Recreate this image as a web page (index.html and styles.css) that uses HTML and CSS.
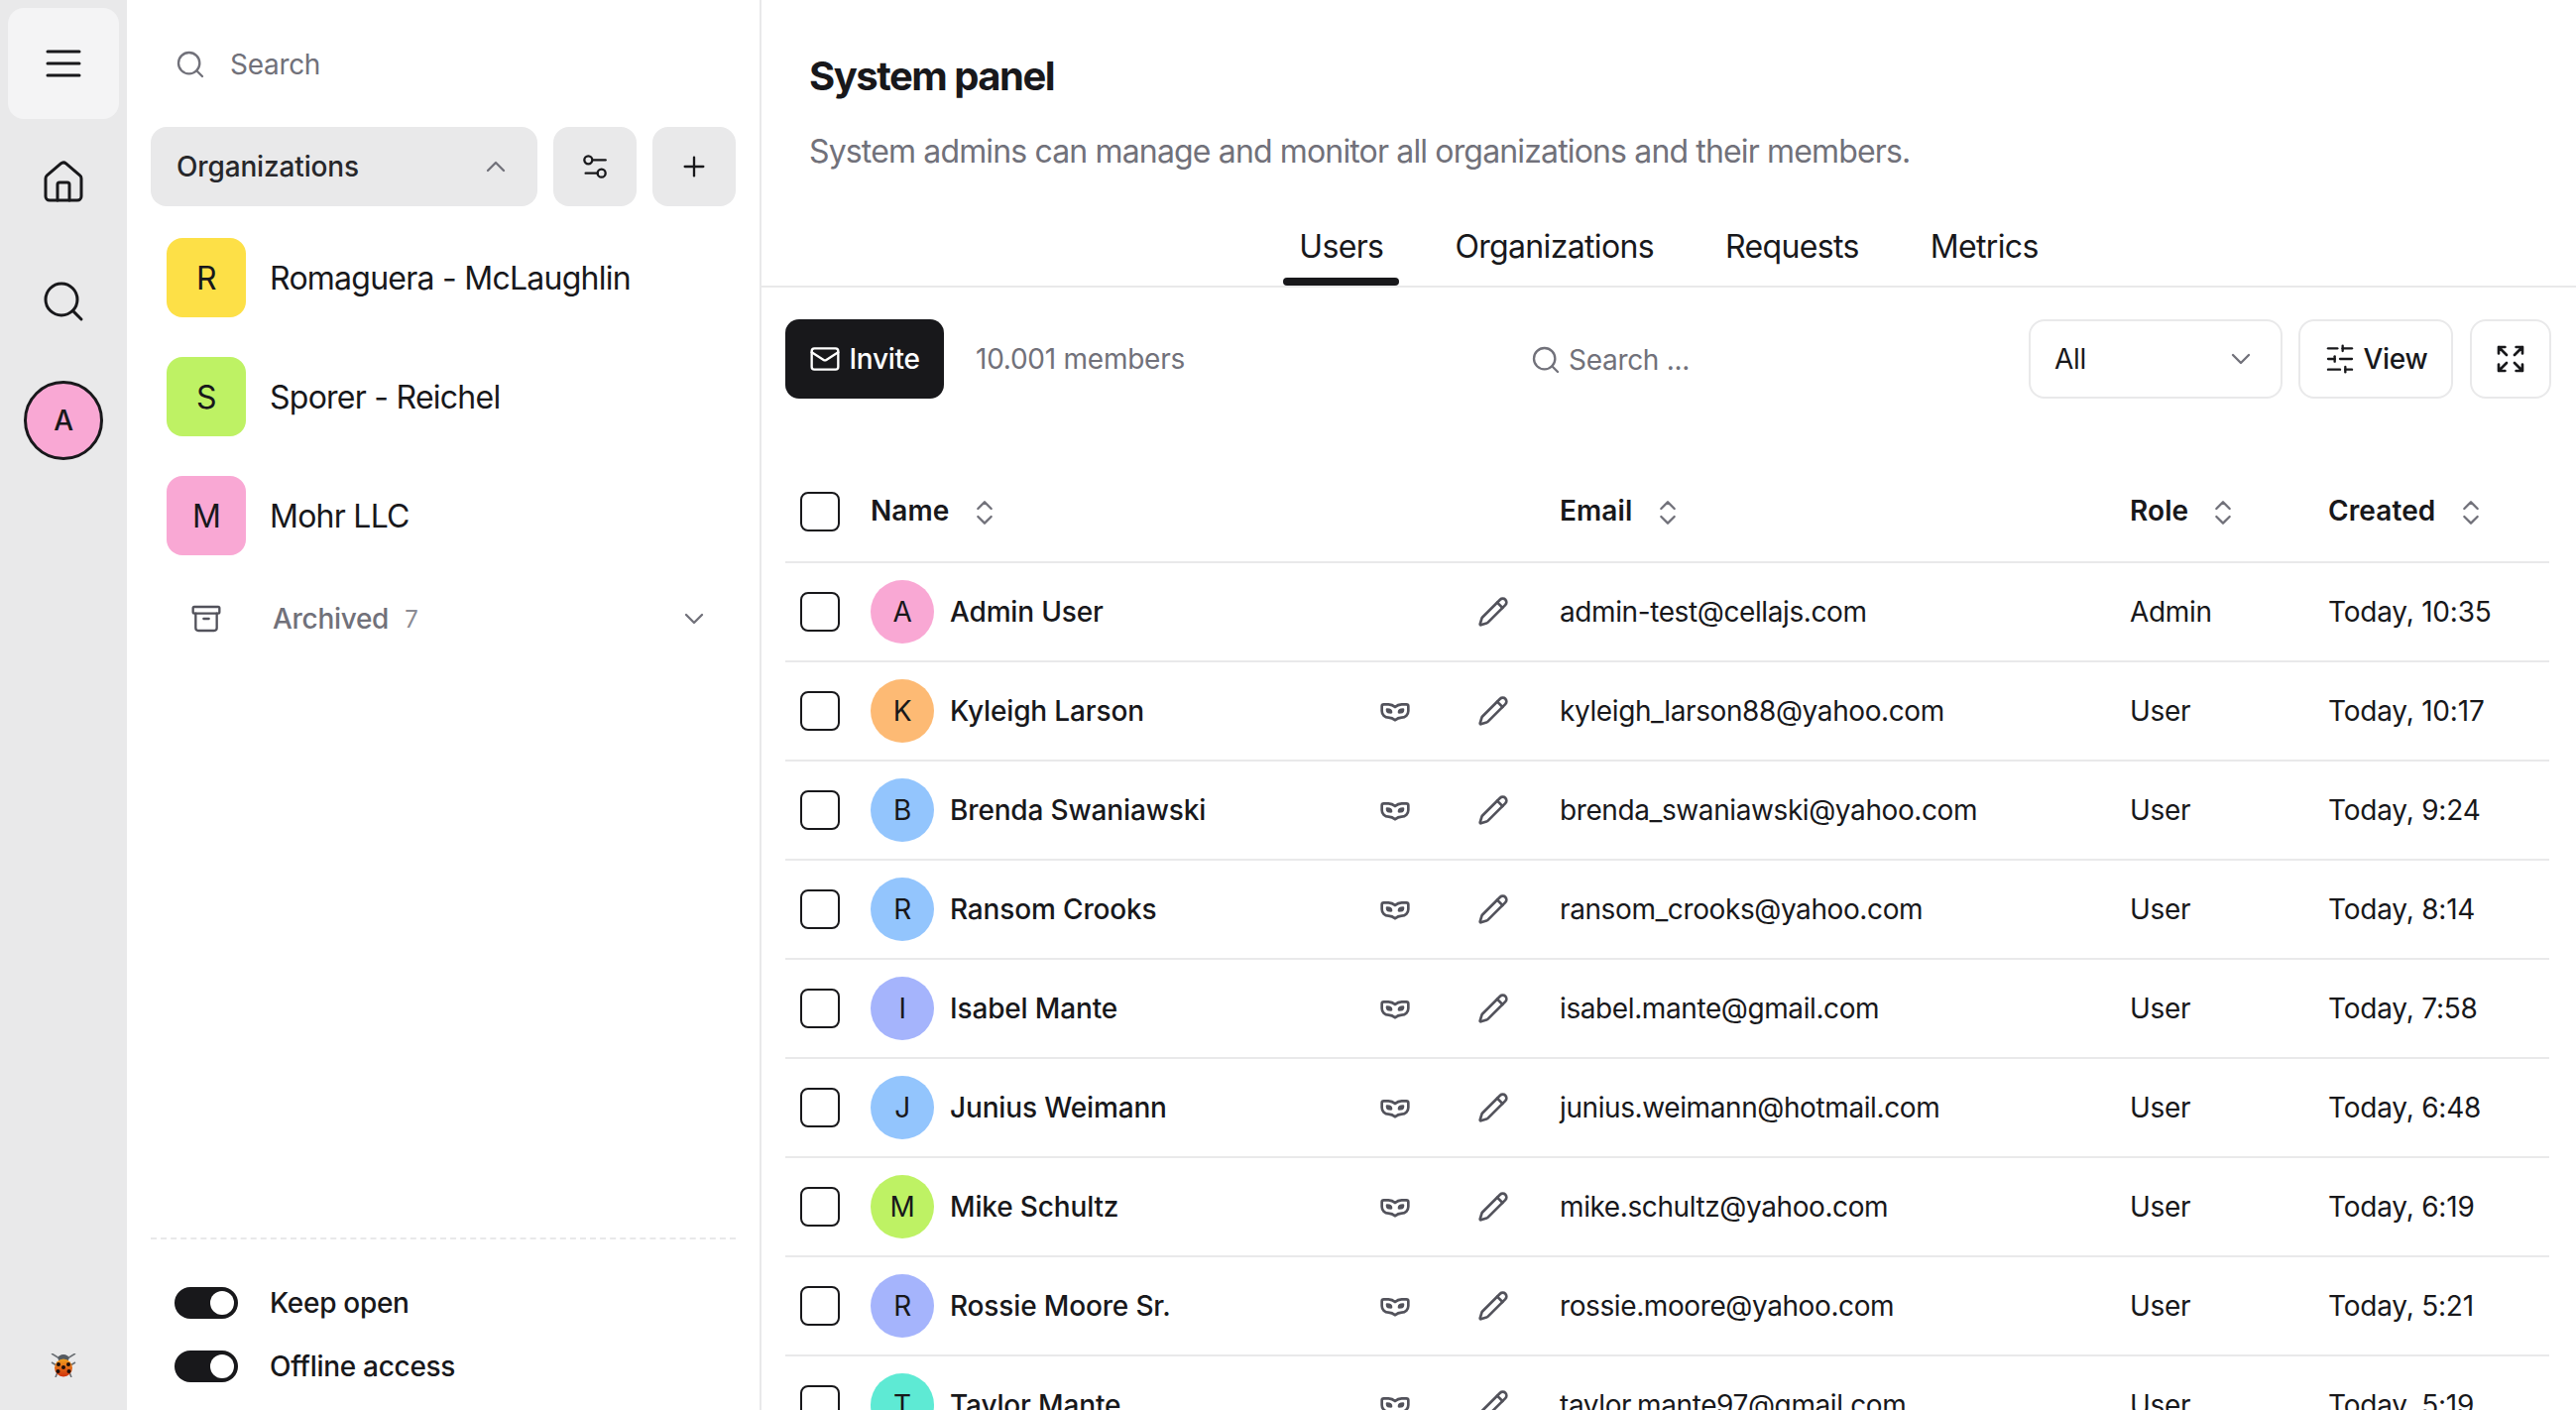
FILE: index.html
```html
<!DOCTYPE html>
<html lang="en">

<head>
    <meta charset="UTF-8">
    <title>System panel</title>
    <link rel="stylesheet" href="styles.css">
</head>

<body>
    <svg class="icon-defs" aria-hidden="true">
        <symbol id="i-search" viewBox="0 0 24 24"><circle cx="11" cy="11" r="8"/><path d="m21 21-4.3-4.3"/></symbol>
        <symbol id="i-sort" viewBox="0 0 24 24"><path d="m7 15 5 5 5-5"/><path d="m7 9 5-5 5 5"/></symbol>
        <symbol id="i-mask" viewBox="0 0 24 24"><path d="M2 12a5 5 0 0 0 5 5 8 8 0 0 1 5 2 8 8 0 0 1 5-2 5 5 0 0 0 5-5V8.5A1.5 1.5 0 0 0 20.500 7H17a8 8 0 0 0-5 2 8 8 0 0 0-5-2H3.500A1.500 1.500 0 0 0 2 8.500Z"/><path d="M6 11c1.500 0 3 .5 3 2-2 0-3 0-3-2Z"/><path d="M18 11c-1.500 0-3 .5-3 2 2 0 3 0 3-2Z"/></symbol>
        <symbol id="i-pencil" viewBox="0 0 24 24"><path d="M21.174 6.812a1 1 0 0 0-3.986-3.987L3.842 16.174a2 2 0 0 0-.5.83l-1.321 4.352a.5.5 0 0 0 .623.622l4.353-1.32a2 2 0 0 0 .83-.497z"/><path d="m15 5 4 4"/></symbol>
    </svg>

    <!-- icon rail -->
    <nav class="rail">
        <button class="rail-btn active">
            <svg class="icon-lg" viewBox="0 0 24 24"><path d="M4 6h16"/><path d="M4 12h16"/><path d="M4 18h16"/></svg>
        </button>
        <button class="rail-btn">
            <svg class="icon-lg" viewBox="0 0 24 24"><path d="M15 21v-8a1 1 0 0 0-1-1h-4a1 1 0 0 0-1 1v8"/><path d="M3 10a2 2 0 0 1 .709-1.528l7-5.999a2 2 0 0 1 2.582 0l7 5.999A2 2 0 0 1 21 10v9a2 2 0 0 1-2 2H5a2 2 0 0 1-2-2z"/></svg>
        </button>
        <button class="rail-btn">
            <svg class="icon-lg" viewBox="0 0 24 24"><use href="#i-search"/></svg>
        </button>
        <button class="rail-btn">
            <span class="rail-avatar">A</span>
        </button>
        <svg class="bug" viewBox="0 0 26 24">
            <defs>
                <linearGradient id="bugBody" x1="0" y1="0" x2="0" y2="1">
                    <stop offset="0" stop-color="#f0a020"/>
                    <stop offset="1" stop-color="#d0300c"/>
                </linearGradient>
            </defs>
            <path class="bug-legs" d="M9 5 1 0M17 5l8-5M6 12 1 9M20 12l5-3M7 19l-2 5M19 19l2 5"/>
            <ellipse cx="13" cy="5" rx="5.500" ry="4" fill="#555a60"/>
            <ellipse cx="13" cy="14.500" rx="9" ry="9" fill="url(#bugBody)"/>
            <g fill="#1d0f0c">
                <circle cx="8" cy="11" r="2"/>
                <circle cx="18" cy="11" r="2"/>
                <circle cx="13" cy="14" r="2"/>
                <circle cx="7.500" cy="18" r="2"/>
                <circle cx="18.500" cy="18" r="2"/>
            </g>
        </svg>
    </nav>

    <!-- organizations sidebar -->
    <aside class="sidebar">
        <div class="side-search">
            <svg class="icon muted" viewBox="0 0 24 24"><use href="#i-search"/></svg>
            <span>Search</span>
        </div>

        <div class="side-actions">
            <button class="side-btn side-btn-wide">
                <span>Organizations</span>
                <svg class="icon muted" viewBox="0 0 24 24"><path d="m18 15-6-6-6 6"/></svg>
            </button>
            <button class="side-btn">
                <svg class="icon" viewBox="0 0 24 24"><path d="M20 7h-9"/><path d="M14 17H5"/><circle cx="17" cy="17" r="3"/><circle cx="7" cy="7" r="3"/></svg>
            </button>
            <button class="side-btn">
                <svg class="icon" viewBox="0 0 24 24"><path d="M5 12h14"/><path d="M12 5v14"/></svg>
            </button>
        </div>

        <ul class="org-list">
            <li class="org-item"><span class="org-tile yellow">R</span>Romaguera - McLaughlin</li>
            <li class="org-item"><span class="org-tile lime">S</span>Sporer - Reichel</li>
            <li class="org-item"><span class="org-tile pink">M</span>Mohr LLC</li>
        </ul>

        <div class="archived">
            <svg class="icon archived-icon" viewBox="0 0 24 24"><rect x="2" y="3" width="20" height="5" rx="1"/><path d="M4 8v11a2 2 0 0 0 2 2h12a2 2 0 0 0 2-2V8"/><path d="M10 12h4"/></svg>
            <span class="archived-label">Archived</span>
            <span class="archived-count">7</span>
            <svg class="icon muted archived-chevron" viewBox="0 0 24 24"><path d="m6 9 6 6 6-6"/></svg>
        </div>

        <div class="side-footer">
            <label class="toggle-row"><span class="toggle"></span>Keep open</label>
            <label class="toggle-row"><span class="toggle"></span>Offline access</label>
        </div>
    </aside>

    <main class="main">
        <header class="page-head">
            <h1>System panel</h1>
            <p>System admins can manage and monitor all organizations and their members.</p>
        </header>

        <div class="tabs">
            <a class="tab active">Users</a>
            <a class="tab">Organizations</a>
            <a class="tab">Requests</a>
            <a class="tab">Metrics</a>
        </div>

        <div class="toolbar">
            <div class="toolbar-left">
                <button class="invite-btn">
                    <svg class="icon" viewBox="0 0 24 24"><rect x="2" y="4" width="20" height="16" rx="2"/><path d="m22 7-8.970 5.700a1.940 1.940 0 0 1-2.060 0L2 7"/></svg>
                    Invite
                </button>
                <span class="member-count">10.001 members</span>
            </div>
            <div class="table-search">
                <svg class="icon muted" viewBox="0 0 24 24"><use href="#i-search"/></svg>
                <span>Search ...</span>
            </div>
            <button class="outline-btn select-btn">
                <span>All</span>
                <svg class="icon muted" viewBox="0 0 24 24"><path d="m6 9 6 6 6-6"/></svg>
            </button>
            <button class="outline-btn view-btn">
                <svg class="icon" viewBox="0 0 24 24"><path d="M21 4h-7"/><path d="M10 4H3"/><path d="M21 12h-9"/><path d="M8 12H3"/><path d="M21 20h-5"/><path d="M12 20H3"/><path d="M14 2v4"/><path d="M8 10v4"/><path d="M16 18v4"/></svg>
                View
            </button>
            <button class="outline-btn expand-btn">
                <svg class="icon bold" viewBox="0 0 24 24"><path d="m21 21-6-6m6 6v-4.800m0 4.800h-4.800"/><path d="M3 16.200V21m0 0h4.800M3 21l6-6"/><path d="M21 7.800V3m0 0h-4.800M21 3l-6 6"/><path d="M3 7.800V3m0 0h4.800M3 3l6 6"/></svg>
            </button>
        </div>

        <table class="users">
            <colgroup>
                <col class="col-check">
                <col class="col-name">
                <col class="col-email">
                <col class="col-role">
                <col class="col-created">
            </colgroup>
            <thead>
                <tr>
                    <th><span class="check"></span></th>
                    <th>Name <svg class="icon muted sort" viewBox="0 0 24 24"><use href="#i-sort"/></svg></th>
                    <th>Email <svg class="icon muted sort" viewBox="0 0 24 24"><use href="#i-sort"/></svg></th>
                    <th>Role <svg class="icon muted sort" viewBox="0 0 24 24"><use href="#i-sort"/></svg></th>
                    <th>Created <svg class="icon muted sort" viewBox="0 0 24 24"><use href="#i-sort"/></svg></th>
                </tr>
            </thead>
            <tbody>
                <tr>
                    <td><span class="check"></span></td>
                    <td><div class="user"><span class="avatar pink">A</span><span class="user-name">Admin User</span><svg class="icon act" viewBox="0 0 24 24"><use href="#i-pencil"/></svg></div></td>
                    <td class="email">admin-test@cellajs.com</td>
                    <td>Admin</td>
                    <td class="created">Today, 10:35</td>
                </tr>
                <tr>
                    <td><span class="check"></span></td>
                    <td><div class="user"><span class="avatar orange">K</span><span class="user-name">Kyleigh Larson</span><svg class="icon act mask" viewBox="0 0 24 24"><use href="#i-mask"/></svg><svg class="icon act" viewBox="0 0 24 24"><use href="#i-pencil"/></svg></div></td>
                    <td class="email">kyleigh_larson88@yahoo.com</td>
                    <td>User</td>
                    <td class="created">Today, 10:17</td>
                </tr>
                <tr>
                    <td><span class="check"></span></td>
                    <td><div class="user"><span class="avatar blue">B</span><span class="user-name">Brenda Swaniawski</span><svg class="icon act mask" viewBox="0 0 24 24"><use href="#i-mask"/></svg><svg class="icon act" viewBox="0 0 24 24"><use href="#i-pencil"/></svg></div></td>
                    <td class="email">brenda_swaniawski@yahoo.com</td>
                    <td>User</td>
                    <td class="created">Today, 9:24</td>
                </tr>
                <tr>
                    <td><span class="check"></span></td>
                    <td><div class="user"><span class="avatar blue">R</span><span class="user-name">Ransom Crooks</span><svg class="icon act mask" viewBox="0 0 24 24"><use href="#i-mask"/></svg><svg class="icon act" viewBox="0 0 24 24"><use href="#i-pencil"/></svg></div></td>
                    <td class="email">ransom_crooks@yahoo.com</td>
                    <td>User</td>
                    <td class="created">Today, 8:14</td>
                </tr>
                <tr>
                    <td><span class="check"></span></td>
                    <td><div class="user"><span class="avatar indigo">I</span><span class="user-name">Isabel Mante</span><svg class="icon act mask" viewBox="0 0 24 24"><use href="#i-mask"/></svg><svg class="icon act" viewBox="0 0 24 24"><use href="#i-pencil"/></svg></div></td>
                    <td class="email">isabel.mante@gmail.com</td>
                    <td>User</td>
                    <td class="created">Today, 7:58</td>
                </tr>
                <tr>
                    <td><span class="check"></span></td>
                    <td><div class="user"><span class="avatar blue">J</span><span class="user-name">Junius Weimann</span><svg class="icon act mask" viewBox="0 0 24 24"><use href="#i-mask"/></svg><svg class="icon act" viewBox="0 0 24 24"><use href="#i-pencil"/></svg></div></td>
                    <td class="email">junius.weimann@hotmail.com</td>
                    <td>User</td>
                    <td class="created">Today, 6:48</td>
                </tr>
                <tr>
                    <td><span class="check"></span></td>
                    <td><div class="user"><span class="avatar lime">M</span><span class="user-name">Mike Schultz</span><svg class="icon act mask" viewBox="0 0 24 24"><use href="#i-mask"/></svg><svg class="icon act" viewBox="0 0 24 24"><use href="#i-pencil"/></svg></div></td>
                    <td class="email">mike.schultz@yahoo.com</td>
                    <td>User</td>
                    <td class="created">Today, 6:19</td>
                </tr>
                <tr>
                    <td><span class="check"></span></td>
                    <td><div class="user"><span class="avatar indigo">R</span><span class="user-name">Rossie Moore Sr.</span><svg class="icon act mask" viewBox="0 0 24 24"><use href="#i-mask"/></svg><svg class="icon act" viewBox="0 0 24 24"><use href="#i-pencil"/></svg></div></td>
                    <td class="email">rossie.moore@yahoo.com</td>
                    <td>User</td>
                    <td class="created">Today, 5:21</td>
                </tr>
                <tr>
                    <td><span class="check"></span></td>
                    <td><div class="user"><span class="avatar teal">T</span><span class="user-name">Taylor Mante</span><svg class="icon act mask" viewBox="0 0 24 24"><use href="#i-mask"/></svg><svg class="icon act" viewBox="0 0 24 24"><use href="#i-pencil"/></svg></div></td>
                    <td class="email">taylor.mante97@gmail.com</td>
                    <td>User</td>
                    <td class="created">Today, 5:19</td>
                </tr>
            </tbody>
        </table>
    </main>
</body>

</html>
```

FILE: styles.css
```css
* {
    box-sizing: border-box;
}

html,
body {
    height: 100%;
}

body {
    margin: 0;
    display: flex;
    overflow: hidden;
    background-color: #fff;
    color: #18181b;
    font-family: Inter, "Liberation Sans", sans-serif;
    font-size: 28px;
    letter-spacing: -0.3px;
}

button {
    font-family: inherit;
    letter-spacing: inherit;
    color: inherit;
    border: none;
    background: none;
    padding: 0;
}

ul {
    list-style: none;
    margin: 0;
    padding: 0;
}

.icon-defs {
    display: none;
}

.icon,
.icon-lg {
    width: 32px;
    height: 32px;
    flex-shrink: 0;
    fill: none;
    stroke: currentColor;
    stroke-width: 1.75;
    stroke-linecap: round;
    stroke-linejoin: round;
}

.icon-lg {
    width: 48px;
    height: 48px;
    stroke-width: 1.5;
}

.icon.muted {
    color: #71717a;
}

.icon.bold {
    stroke-width: 2;
}

/* icon rail */
.rail {
    width: 128px;
    flex-shrink: 0;
    display: flex;
    flex-direction: column;
    align-items: center;
    padding: 4px 8px 0;
    background-color: #e9e9ea;
}

.rail-btn {
    width: 112px;
    height: 112px;
    margin: 4px 0;
    display: flex;
    align-items: center;
    justify-content: center;
    border-radius: 16px;
}

.rail-btn.active {
    background-color: #f4f4f5;
}

.rail-avatar {
    width: 80px;
    height: 80px;
    display: flex;
    align-items: center;
    justify-content: center;
    border: 3px solid #18181b;
    border-radius: 50%;
    background-color: #f9a8d4;
    font-size: 28px;
    font-weight: 500;
}

.bug {
    width: 26px;
    height: 24px;
    margin-top: auto;
    margin-bottom: 33px;
}

.bug-legs {
    fill: none;
    stroke: #6b6f74;
    stroke-width: 1.6;
}

/* organizations sidebar */
.sidebar {
    width: 640px;
    flex-shrink: 0;
    display: flex;
    flex-direction: column;
    padding: 0 24px;
    border-right: 2px solid #e9e9ea;
}

.side-search {
    height: 128px;
    display: flex;
    align-items: center;
    gap: 24px;
    padding: 2px 0 0 24px;
    color: #71717a;
}

.side-actions {
    display: flex;
    gap: 16px;
}

.side-btn {
    width: 84px;
    height: 80px;
    display: flex;
    align-items: center;
    justify-content: center;
    border-radius: 16px;
    background-color: #e9e9ea;
}

.side-btn-wide {
    width: 390px;
    justify-content: space-between;
    padding: 0 26px;
    font-size: 28px;
    font-weight: 500;
    letter-spacing: -0.15px;
    color: #27272a;
}

.org-list {
    margin-top: 32px;
}

.org-item {
    height: 80px;
    margin-bottom: 40px;
    display: flex;
    align-items: center;
    gap: 24px;
    padding-left: 16px;
    font-size: 32px;
    letter-spacing: -0.75px;
}

.org-tile {
    width: 80px;
    height: 80px;
    display: flex;
    align-items: center;
    justify-content: center;
    border-radius: 16px;
}

.yellow {
    background-color: #fde047;
}

.lime {
    background-color: #bef264;
}

.pink {
    background-color: #f9a8d4;
}

.orange {
    background-color: #fdba74;
}

.blue {
    background-color: #93c5fd;
}

.indigo {
    background-color: #a5b4fc;
}

.teal {
    background-color: #5eead4;
}

.archived {
    height: 64px;
    margin-top: -8px;
    display: flex;
    align-items: center;
    padding-left: 40px;
    color: #71717a;
}

.archived-icon {
    color: #52525b;
}

.archived-label {
    margin-left: 51px;
    font-size: 28px;
    font-weight: 500;
}

.archived-count {
    margin-left: 16px;
    font-size: 24px;
    color: #8b8b93;
}

.archived-chevron {
    margin-left: auto;
    margin-right: 26px;
}

.side-footer {
    margin-top: auto;
    padding: 48px 0 28px 24px;
    border-top: 2px dashed #e9e9ea;
}

.toggle-row {
    height: 32px;
    margin-bottom: 32px;
    display: flex;
    align-items: center;
    gap: 32px;
    font-weight: 500;
}

.toggle-row:last-child {
    margin-bottom: 0;
}

.toggle {
    position: relative;
    width: 64px;
    height: 32px;
    border-radius: 16px;
    background-color: #18181b;
}

.toggle::after {
    content: "";
    position: absolute;
    top: 4px;
    right: 4px;
    width: 24px;
    height: 24px;
    border-radius: 50%;
    background-color: #fff;
}

/* main panel */
.main {
    flex: 1;
    min-width: 0;
    padding-top: 53px;
}

.page-head {
    padding-left: 48px;
}

.page-head h1 {
    margin: 0;
    font-size: 40px;
    line-height: 48px;
    font-weight: 700;
    letter-spacing: -1.5px;
}

.page-head p {
    margin: 28px 0 0;
    font-size: 32px;
    line-height: 48px;
    letter-spacing: -0.85px;
    color: #71717a;
}

.tabs {
    height: 82px;
    margin-top: 31px;
    display: flex;
    justify-content: center;
    gap: 40px;
    border-bottom: 2px solid #e9e9ea;
}

.tab {
    position: relative;
    height: 80px;
    padding: 0 16px;
    display: flex;
    align-items: center;
    font-size: 32px;
    letter-spacing: -0.65px;
}

.tab.active::after {
    content: "";
    position: absolute;
    left: 0;
    right: 0;
    bottom: 0;
    height: 8px;
    border-radius: 4px;
    background-color: #18181b;
}

.toolbar {
    height: 80px;
    margin: 32px 25px 0 24px;
    display: flex;
    align-items: center;
}

.toolbar-left {
    width: 751px;
    display: flex;
    align-items: center;
}

.invite-btn {
    width: 160px;
    height: 80px;
    display: flex;
    align-items: center;
    justify-content: center;
    gap: 8px;
    border-radius: 14px;
    background-color: #18181b;
    color: #fff;
    font-size: 28px;
    font-weight: 500;
}

.member-count {
    margin-left: 32px;
    letter-spacing: -0.25px;
    color: #71717a;
}

.table-search {
    flex: 1;
    display: flex;
    align-items: center;
    gap: 7px;
    padding-top: 2px;
    color: #71717a;
}

.outline-btn {
    height: 80px;
    display: flex;
    align-items: center;
    border: 2px solid #e9e9ea;
    border-radius: 16px;
    font-size: 28px;
    font-weight: 500;
}

.select-btn {
    width: 256px;
    justify-content: space-between;
    padding: 0 24px;
    font-weight: 400;
}

.view-btn {
    width: 156px;
    margin-left: 16px;
    justify-content: center;
    gap: 8px;
}

.expand-btn {
    width: 82px;
    margin-left: 17px;
    justify-content: center;
}

.users {
    width: 1779px;
    margin: 65px 0 0 24px;
    border-collapse: collapse;
    table-layout: fixed;
}

.col-check {
    width: 86px;
}

.col-name {
    width: 695px;
}

.col-email {
    width: 575px;
}

.col-role {
    width: 200px;
}

.col-created {
    width: 223px;
}

.users th,
.users td {
    height: 100px;
    padding: 0;
    border-bottom: 2px solid #e9e9ea;
    text-align: left;
    vertical-align: middle;
    white-space: nowrap;
}

.users th {
    padding-bottom: 2px;
    font-weight: 600;
    letter-spacing: 0.1px;
}

.users td.email {
    letter-spacing: -0.4px;
}

.users td.created {
    letter-spacing: -0.2px;
}

.users td:first-child,
.users th:first-child {
    padding-left: 15px;
}

.check {
    display: block;
    width: 40px;
    height: 40px;
    border: 2px solid #18181b;
    border-radius: 8px;
}

.sort {
    margin-left: 12px;
    vertical-align: middle;
}

.user {
    display: flex;
    align-items: center;
    padding-right: 51px;
}

.avatar {
    width: 64px;
    height: 64px;
    flex-shrink: 0;
    display: flex;
    align-items: center;
    justify-content: center;
    border-radius: 50%;
    margin-right: 16px;
}

.user-name {
    flex: 1;
    font-weight: 500;
    letter-spacing: -0.15px;
}

.icon.act {
    color: #52525b;
    stroke-width: 2;
}

.mask {
    margin-right: 67px;
}
```
